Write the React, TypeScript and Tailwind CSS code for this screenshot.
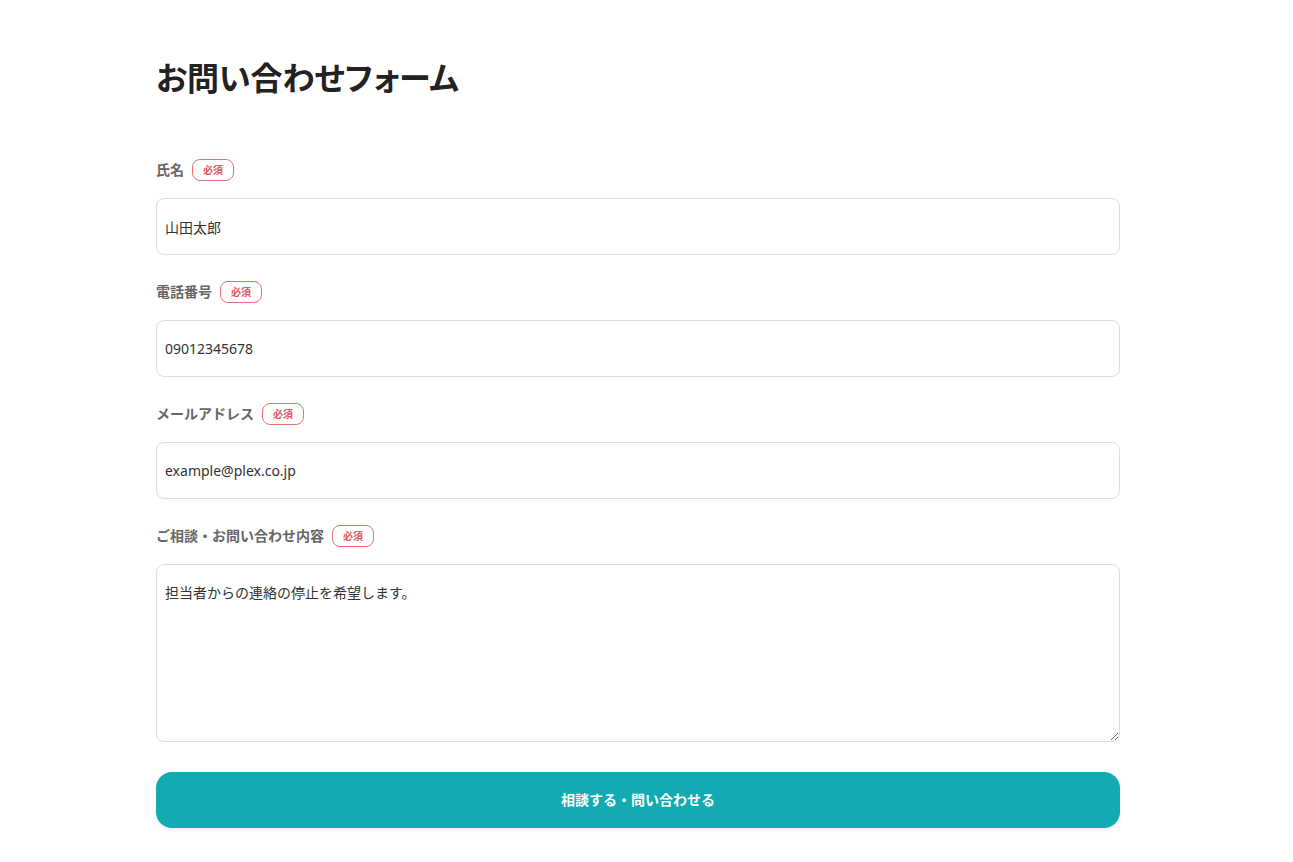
import React from 'react';

const font = {
  fontFamily: '"Noto Sans", "Noto Sans CJK JP", sans-serif',
};

const field =
  'mt-[17px] w-full rounded-[8px] border border-[#ddd] px-[8px] text-sm text-[#333] outline-none';

function Label({ text }: { text: string }) {
  return (
    <div className="flex items-center h-[22px] gap-2">
      <span className="text-sm font-bold text-[#666]">{text}</span>
      <span className="h-[22px] px-[10px] flex items-center rounded-[8px] border border-[#e87070] text-[10px] font-bold text-[#e05858] leading-none">
        必須
      </span>
    </div>
  );
}

export default function App() {
  return (
    <div className="min-h-screen bg-white" style={font}>
      <div className="ml-[156px] w-[964px] pt-[54px] pb-[34px]">
        <h1 className="text-[32px] leading-[48px] font-bold text-[#222] [font-feature-settings:'palt']">
          お問い合わせフォーム
        </h1>
        <form className="mt-[57px] flex flex-col">
          <Label text="氏名" />
          <input defaultValue="山田太郎" className={`${field} h-[57px]`} />
          <div className="mt-[26px]">
            <Label text="電話番号" />
          </div>
          <input defaultValue="09012345678" className={`${field} h-[57px]`} />
          <div className="mt-[26px]">
            <Label text="メールアドレス" />
          </div>
          <input defaultValue="example@plex.co.jp" className={`${field} h-[57px]`} />
          <div className="mt-[26px]">
            <Label text="ご相談・お問い合わせ内容" />
          </div>
          <textarea
            defaultValue="担当者からの連絡の停止を希望します。"
            className={`${field} h-[178px] py-[16px] leading-[24px]`}
          />
          <button
            type="button"
            className="mt-[30px] h-[56px] w-full rounded-[16px] bg-[#13abb2] text-sm font-bold text-white shadow-[0_2px_4px_rgba(0,0,0,0.08)]"
          >
            相談する・問い合わせる
          </button>
        </form>
      </div>
    </div>
  );
}
